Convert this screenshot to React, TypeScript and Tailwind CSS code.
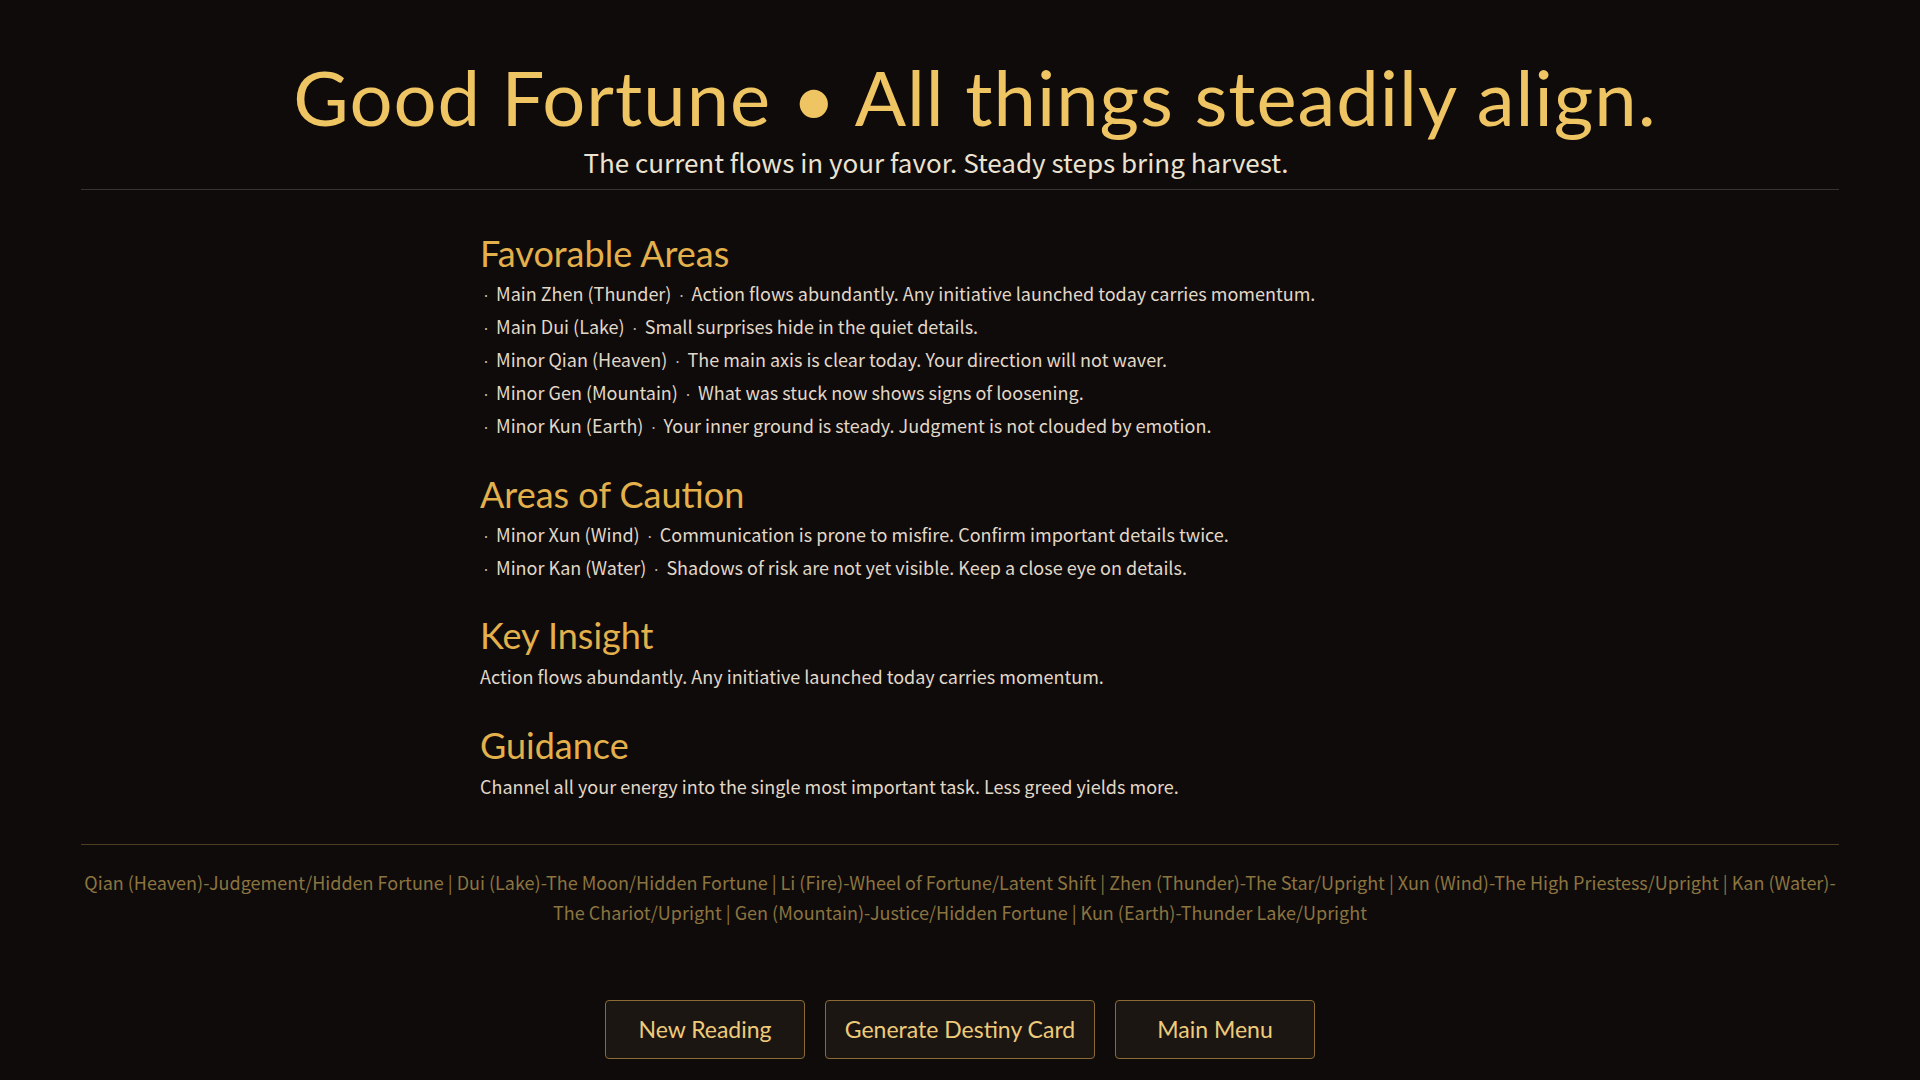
const favorable = [
  ['Main Zhen (Thunder)', 'Action flows abundantly. Any initiative launched today carries momentum.'],
  ['Main Dui (Lake)', 'Small surprises hide in the quiet details.'],
  ['Minor Qian (Heaven)', 'The main axis is clear today. Your direction will not waver.'],
  ['Minor Gen (Mountain)', 'What was stuck now shows signs of loosening.'],
  ['Minor Kun (Earth)', 'Your inner ground is steady. Judgment is not clouded by emotion.'],
];

const caution = [
  ['Minor Xun (Wind)', 'Communication is prone to misfire. Confirm important details twice.'],
  ['Minor Kan (Water)', 'Shadows of risk are not yet visible. Keep a close eye on details.'],
];

const footer =
  'Qian (Heaven)-Judgement/Hidden Fortune | Dui (Lake)-The Moon/Hidden Fortune | Li (Fire)-Wheel of Fortune/Latent Shift | Zhen (Thunder)-The Star/Upright | Xun (Wind)-The High Priestess/Upright | Kan (Water)-The Chariot/Upright | Gen (Mountain)-Justice/Hidden Fortune | Kun (Earth)-Thunder Lake/Upright';

const buttons = [
  { label: 'New Reading', w: 'w-[200px]' },
  { label: 'Generate Destiny Card', w: 'w-[270px]' },
  { label: 'Main Menu', w: 'w-[200px]' },
];

const display = "font-['Lato','Noto_Sans',sans-serif]";

function SectionTitle({ children }: { children: string }) {
  return <h2 className={`${display} text-[36px] leading-[47px] text-[#e3b04b]`}>{children}</h2>;
}

function Dot() {
  return <span className="px-[3px] leading-none font-['Liberation_Sans',sans-serif] text-[#bdb3a4]">·</span>;
}

function Bullets({ items }: { items: string[][] }) {
  return (
    <ul>
      {items.map(([who, what]) => (
        <li key={who} className="h-[33px] leading-[33px] whitespace-nowrap">
          <Dot /> {who} <Dot /> {what}
        </li>
      ))}
    </ul>
  );
}

export default function App() {
  return (
    <div className="min-h-screen bg-[#0e0b0a] font-['Noto_Sans_CJK_SC','Noto_Sans',sans-serif] text-[#e2d8c8]">
      <div className="px-[81px]">
        <div className="pt-[51px] pb-[10px] text-center border-b border-[#3a3430]">
          <h1 className={`${display} pl-[30px] text-[76px] leading-[92px] text-[#efc462] tracking-[1px]`}>
            Good Fortune • All things steadily align.
          </h1>
          <p className="mt-[2px] pr-[48px] text-[26px] leading-[34px] text-[#ece2d0]">
            The current flows in your favor. Steady steps bring harvest.
          </p>
        </div>

        <div className="max-w-[960px] mx-auto pt-[40px] pb-[41px] text-[18px]">
          <section>
            <SectionTitle>Favorable Areas</SectionTitle>
            <Bullets items={favorable} />
          </section>
          <section className="mt-[29px]">
            <SectionTitle>Areas of Caution</SectionTitle>
            <Bullets items={caution} />
          </section>
          <section className="mt-[28px]">
            <SectionTitle>Key Insight</SectionTitle>
            <p className="leading-[33px] mt-[1px]">
              Action flows abundantly. Any initiative launched today carries momentum.
            </p>
          </section>
          <section className="mt-[29px]">
            <SectionTitle>Guidance</SectionTitle>
            <p className="leading-[33px] mt-[1px]">
              Channel all your energy into the single most important task. Less greed yields more.
            </p>
          </section>
        </div>

        <div className="border-t border-[#4e3f22] pt-[22px]">
          <p className="text-center text-[18px] leading-[30px] text-[#8c7440]">{footer}</p>
        </div>

        <div className="flex justify-center gap-[20px] pt-[73px] pb-[21px]">
          {buttons.map(({ label, w }) => (
            <button
              key={label}
              className={`${display} ${w} h-[59px] rounded-[4px] border border-[#8b6b35] bg-[#1b1612] text-[23px] text-[#eecb7a]`}
            >
              {label}
            </button>
          ))}
        </div>
      </div>
    </div>
  );
}
